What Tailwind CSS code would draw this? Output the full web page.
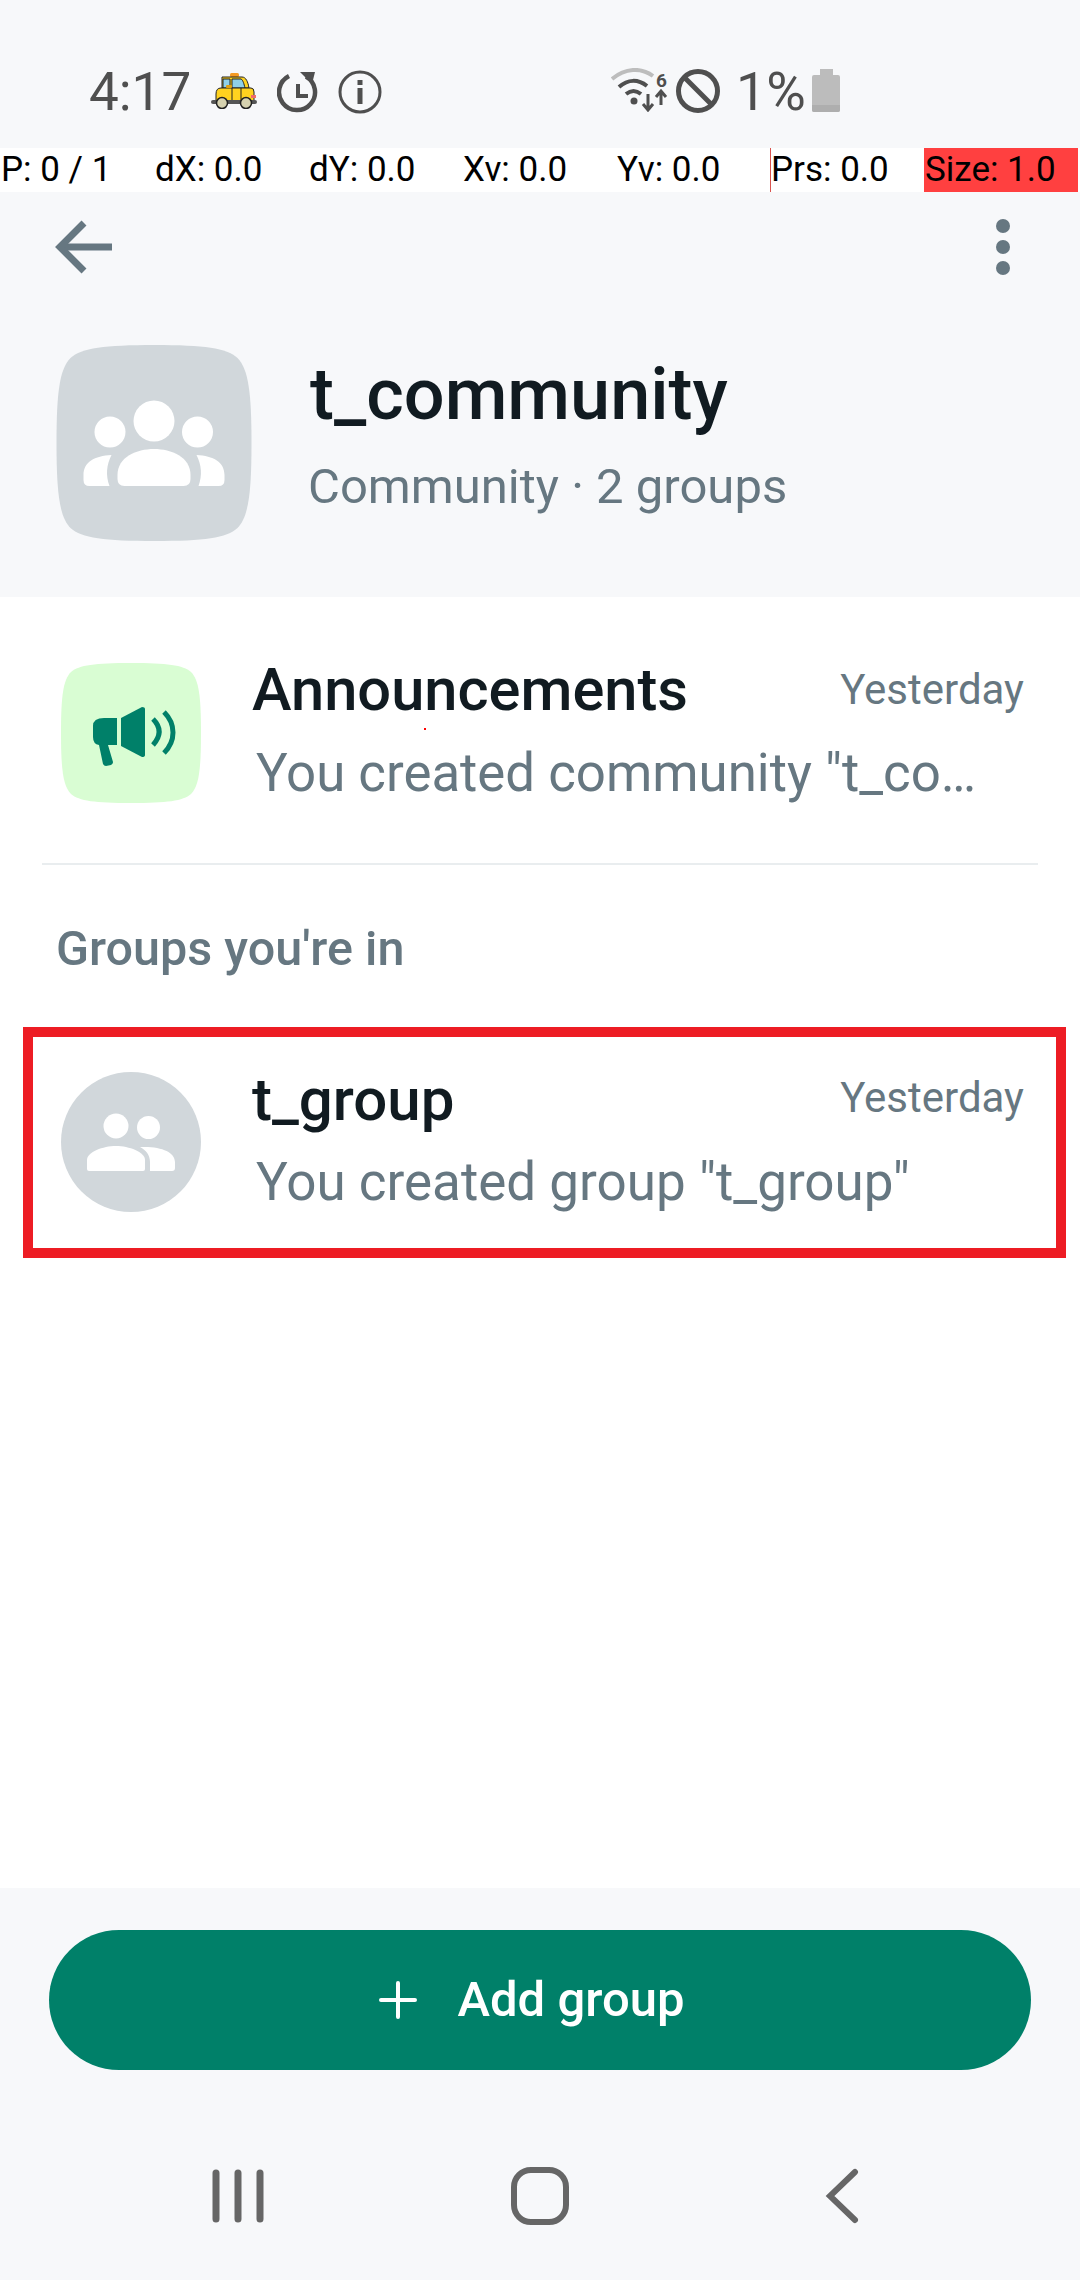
<!DOCTYPE html>
<html lang="en">
<head>
    <meta charset="UTF-8">
    <meta name="viewport" content="width=device-width, initial-scale=1.0">
    <title>t_community</title>
    <script src="https://cdn.jsdelivr.net/npm/@tailwindcss/browser@4"></script>
</head>
<body class="bg-white font-['Roboto',sans-serif]">
<div class="relative w-[1080px] h-[2280px] flex flex-col overflow-hidden">

    <!-- status bar -->
    <div class="h-[148px] bg-[#f7f8fa] flex items-start text-[#4f4f4f]">
        <span class="ml-[89px] mt-[62px] w-[117px] text-[53px] leading-[60px]">4:17</span>
        <svg class="mt-[73px] ml-[5px]" width="46" height="36" viewBox="0 0 46 36">
            <rect x="19" y="0" width="9" height="4" rx="1.5" fill="#f59a23"/>
            <path d="M11 15V4H31C35 4 37 9 38 15Z" fill="#ffd21f" stroke="#222" stroke-width="1"/>
            <path d="M12 6H19V15H12Z" fill="#8fd0e8" stroke="#222" stroke-width="1"/>
            <path d="M21 6H30C32 7 33 11 34 15H21Z" fill="#8fd0e8" stroke="#222" stroke-width="1"/>
            <path d="M5 21Q5 15 10 15H40Q43 15 43 19V29H5Z" fill="#ffd21f" stroke="#222" stroke-width="1"/>
            <rect x="15" y="12" width="6" height="3" rx="1" fill="#e0a010"/>
            <path d="M21 15V28M30 15V28" stroke="#222" stroke-width="1"/>
            <rect x="0" y="27" width="46" height="4" rx="2" fill="#555"/>
            <circle cx="11" cy="30" r="5.5" fill="#d6d2b0" stroke="#222" stroke-width="1.5"/>
            <circle cx="35" cy="30" r="5.5" fill="#d6d2b0" stroke="#222" stroke-width="1.5"/>
            <rect x="40" y="22" width="5" height="3" fill="#f06a6a"/>
        </svg>
        <svg class="mt-[70px] ml-[20px]" width="42" height="44" viewBox="0 0 42 44" fill="none" stroke="#4f4f4f">
            <path d="M29 6.5A18 18 0 1 1 12 6" stroke-width="4.5"/>
            <path d="M23 2H38L35 14Z" fill="#4f4f4f" stroke="none"/>
            <path d="M21 14V26H31" stroke-width="4"/>
        </svg>
        <svg class="mt-[70px] ml-[19px]" width="44" height="44" viewBox="0 0 44 44" fill="none">
            <circle cx="22" cy="22" r="20" stroke="#4f4f4f" stroke-width="3"/>
            <rect x="19.5" y="18" width="5" height="16" fill="#4f4f4f"/>
            <rect x="19.5" y="10" width="5" height="5" fill="#4f4f4f"/>
        </svg>
        <svg class="mt-[68px] ml-[229px]" width="58" height="44" viewBox="0 0 58 44" fill="none">
            <path d="M1 11C14 0 30 -1 42 8" stroke="#bdbdbd" stroke-width="4"/>
            <path d="M8 19C17 11 27 11 36 18" stroke="#4f4f4f" stroke-width="4"/>
            <path d="M15 26C20 22 25 22 30 26" stroke="#4f4f4f" stroke-width="4"/>
            <circle cx="23" cy="33" r="3.5" fill="#4f4f4f"/>
            <path d="M37 26V41M32 36L37 42L42 36" stroke="#4f4f4f" stroke-width="3"/>
            <path d="M50 37V24M45 29L50 23L55 29" stroke="#4f4f4f" stroke-width="3"/>
            <text x="45" y="19" font-size="19" font-weight="700" fill="#4f4f4f" font-family="Roboto">6</text>
        </svg>
        <svg class="mt-[69px] ml-[7px]" width="44" height="44" viewBox="0 0 44 44" fill="none" stroke="#4f4f4f" stroke-width="5">
            <circle cx="22" cy="22" r="19.5"/>
            <path d="M8 8L36 36"/>
        </svg>
        <span class="ml-[16px] mt-[62px] w-[72px] text-[54px] leading-[60px]">1%</span>
        <svg class="mt-[69px] ml-[4px]" width="28" height="43" viewBox="0 0 28 43">
            <path d="M8 0H21V6H26Q28 6 28 8V41Q28 43 26 43H2Q0 43 0 41V8Q0 6 2 6H8Z" fill="#bcbcbc"/>
            <path d="M0 36H28V41Q28 43 26 43H2Q0 43 0 41Z" fill="#aeaeae"/>
        </svg>
    </div>

    <!-- pointer overlay -->
    <div class="h-[44px] grid grid-cols-7 w-[1078px] text-[35px] leading-[44px] text-black whitespace-nowrap">
        <span class="bg-white/50 pl-[1px]">P: 0 / 1</span>
        <span class="bg-white/50 pl-[1px]">dX: 0.0</span>
        <span class="bg-white/50 pl-[1px]">dY: 0.0</span>
        <span class="bg-white/50 pl-[1px]">Xv: 0.0</span>
        <span class="bg-white/70 pl-[1px]">Yv: 0.0</span>
        <span class="bg-white/70 border-l border-[#d9534f]">Prs: 0.0</span>
        <span class="bg-[#ff4040] pl-[1px]">Size: 1.0</span>
    </div>

    <!-- community header -->
    <header class="bg-[#f7f8fa] h-[405px] flex flex-col">
        <div class="h-[110px] flex items-center justify-between pl-[54px] pr-[70px]">
            <svg width="58" height="56" viewBox="0 0 58 56" fill="none" stroke="#667781" stroke-width="7">
                <path d="M5 28H58"/>
                <path d="M30 4L6 28L30 52"/>
            </svg>
            <div class="flex flex-col gap-[7px]">
                <span class="w-[14px] h-[14px] rounded-full bg-[#667781]"></span>
                <span class="w-[14px] h-[14px] rounded-full bg-[#667781]"></span>
                <span class="w-[14px] h-[14px] rounded-full bg-[#667781]"></span>
            </div>
        </div>
        <div class="flex mt-[43px] pl-[56px]">
            <svg width="196" height="196" viewBox="0 0 195 196">
                <path d="M98 0C148 0 170 3 181 13C192 24 195 48 195 98C195 148 192 172 181 183C170 193 148 196 98 196C48 196 25 193 14 183C3 172 0 148 0 98C0 48 3 24 14 13C25 3 48 0 98 0Z" fill="#d1d7db"/>
                <circle cx="97.5" cy="76" r="20.5" fill="#fff"/>
                <circle cx="53.5" cy="87" r="15.5" fill="#fff"/>
                <circle cx="141" cy="87" r="15.5" fill="#fff"/>
                <path d="M61 130C61 112 80 104 97.5 104C115 104 134 112 134 130V134Q134 141 127 141H68Q61 141 61 134Z" fill="#fff"/>
                <path d="M55 110C38 111 27 117 27 130V135Q27 141 33 141H53C49 130 50 120 55 110Z" fill="#fff"/>
                <path d="M140 110C157 111 168 117 168 130V135Q168 141 162 141H142C146 130 145 120 140 110Z" fill="#fff"/>
            </svg>
            <div class="ml-[58px] flex flex-col">
                <h1 class="text-[72px] leading-[80px] font-medium text-[#111b21] mt-[10px]">t_community</h1>
                <p class="text-[49px] leading-[54px] text-[#667781] mt-[25px] ml-[-2px]">Community · 2 groups</p>
            </div>
        </div>
    </header>

    <main class="flex-1 flex flex-col">
        <!-- announcements row -->
        <div class="flex pl-[61px] pr-[56px] pt-[66px]">
            <svg class="shrink-0" width="140" height="140" viewBox="0 0 140 140">
                <path d="M70 0C106 0 122 2 130 9C138 17 140 34 140 70C140 106 138 123 130 131C122 138 106 140 70 140C34 140 18 138 10 131C2 123 0 106 0 70C0 34 2 17 10 9C18 2 34 0 70 0Z" fill="#d9fdd3"/>
                <path d="M43 55H56V82H47L52 99Q52 101 50 102L45 103Q43 103 42 101L38 82Q32 81 32 74V63Q32 55 43 55Z" fill="#008069"/>
                <path d="M60 55L81 44Q84 44 84 46V92Q84 94 81 94L60 83Z" fill="#008069"/>
                <path d="M92 56C100 64 100 73 92 82" stroke="#008069" stroke-width="5" fill="none"/>
                <path d="M103 49C115 61 115 78 103 90" stroke="#008069" stroke-width="5" fill="none"/>
            </svg>
            <div class="ml-[51px] flex-1 min-w-0">
                <div class="flex justify-between">
                    <span class="text-[59.6px] leading-[64px] font-medium text-[#111b21] mt-[-5px]">Announcements</span>
                    <span class="text-[42px] leading-[48px] text-[#667781] mt-[3px]">Yesterday</span>
                </div>
                <p class="ml-[4px] text-[52.8px] leading-[60px] text-[#667781] mt-[21px] whitespace-nowrap">You created community "t_co…</p>
            </div>
        </div>
        <div class="mx-[42px] mt-[60px] h-[2px] bg-[#e9edef]"></div>

        <h2 class="ml-[56px] mt-[58px] text-[48.5px] leading-[52px] font-medium text-[#667781]">Groups you're in</h2>

        <!-- highlighted group row -->
        <div class="ml-[23px] w-[1043px] mt-[52px] h-[231px] border-[10px] border-[#ed1c24] flex pl-[28px] pr-[32px] pt-[35px]">
            <svg class="shrink-0" width="140" height="140" viewBox="0 0 140 140">
                <circle cx="70" cy="70" r="70" fill="#d1d7db"/>
                <circle cx="55" cy="54" r="12.5" fill="#fff"/>
                <circle cx="87.5" cy="55.5" r="11.5" fill="#fff"/>
                <path d="M26 88C26 80 42 74 55 74C68 74 84 80 84 88V97Q84 99 82 99H28Q26 99 26 97Z" fill="#fff"/>
                <path d="M79 75C100 74 114 80 114 90V96Q114 99 111 99H89V90C89 83 85 78 79 75Z" fill="#fff"/>
            </svg>
            <div class="ml-[51px] flex-1 min-w-0">
                <div class="flex justify-between">
                    <span class="text-[60px] leading-[64px] font-medium text-[#111b21] mt-[-4px]">t_group</span>
                    <span class="text-[42px] leading-[48px] text-[#667781] mt-[2px]">Yesterday</span>
                </div>
                <p class="ml-[4px] text-[53px] leading-[60px] text-[#667781] mt-[20px] whitespace-nowrap">You created group "t_group"</p>
            </div>
        </div>
    </main>

    <!-- bottom bar -->
    <footer class="h-[392px] bg-[#f7f8fa] flex flex-col items-center">
        <button class="mt-[42px] w-[982px] h-[140px] rounded-full bg-[#008069] flex items-center justify-center gap-[41px] pr-[17px] text-white text-[49px] font-medium">
            <svg width="38" height="38" viewBox="0 0 38 38" stroke="#fff" stroke-width="4" stroke-linecap="round"><path d="M19 2V36M2 19H36"/></svg>
            <span>Add group</span>
        </button>
        <nav class="w-full flex items-center mt-[96px] h-[60px] relative">
            <svg class="ml-[212px]" width="52" height="54" viewBox="0 0 52 54" stroke="#666" stroke-width="7" stroke-linecap="round"><path d="M4 4V50M26 4V50M48 4V50"/></svg>
            <svg class="ml-[247px]" width="58" height="58" viewBox="0 0 58 58" fill="none" stroke="#666" stroke-width="6"><rect x="3" y="3" width="52" height="52" rx="17"/></svg>
            <svg class="ml-[256px]" width="34" height="56" viewBox="0 0 34 56" fill="none" stroke="#666" stroke-width="6" stroke-linecap="round"><path d="M30 4L5 28L30 52"/></svg>
        </nav>
    </footer>

    <!-- stray touch pixel from the pointer overlay -->
    <span class="absolute left-[424px] top-[728px] w-[2px] h-[2px] bg-[#ff0000]"></span>
</div>
</body>
</html>
